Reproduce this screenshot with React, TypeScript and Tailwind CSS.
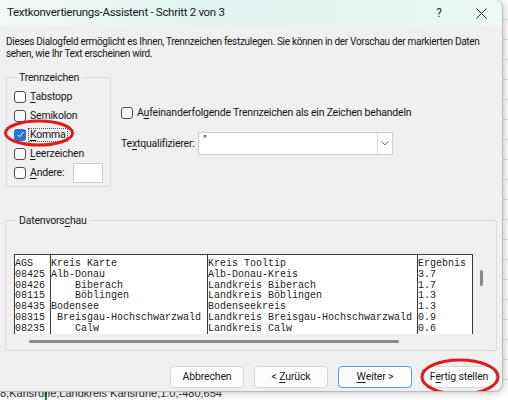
import React from "react";

const U = ({ children }: { children: React.ReactNode }) => (
  <span className="underline underline-offset-[2px] decoration-[1px]">{children}</span>
);

function Check({ checked = false }: { checked?: boolean }) {
  if (checked) {
    return (
      <span className="w-[12px] h-[12px] shrink-0 rounded-[3px] bg-[#2a72cf] flex items-center justify-center">
        <svg width="9" height="9" viewBox="0 0 9 9">
          <path d="M1.6 4.8 L3.6 6.7 L7.4 2.3" fill="none" stroke="#ffffff" strokeWidth="1" />
        </svg>
      </span>
    );
  }
  return <span className="w-[12px] h-[12px] shrink-0 rounded-[3px] border border-[#4d4d4d] bg-[#fbfbfb]" />;
}

const col1 = ["AGS", "08425", "08426", "08115", "08435", "08315", "08235"];
const col2 = [
  "Kreis Karte",
  "Alb-Donau",
  "    Biberach",
  "    Böblingen",
  "Bodensee",
  " Breisgau-Hochschwarzwald",
  "    Calw",
];
const col3 = [
  "Kreis Tooltip",
  "Alb-Donau-Kreis",
  "Landkreis Biberach",
  "Landkreis Böblingen",
  "Bodenseekreis",
  "Landkreis Breisgau-Hochschwarzwald",
  "Landkreis Calw",
];
const col4 = ["Ergebnis", "3.7", "1.7", "1.3", "1.3", "0.9", "0.6"];

function Column({ lines, width, last = false }: { lines: string[]; width: string; last?: boolean }) {
  return (
    <div
      className={`${width} h-full shrink-0 overflow-hidden border-l border-[#3a3a3a] pt-[4px] ${
        last ? "border-r" : ""
      }`}
    >
      {lines.map((l, i) => (
        <div key={i} className="whitespace-pre leading-[10.8px] h-[10.8px]">
          {l}
        </div>
      ))}
    </div>
  );
}

function Button({ children, primary = false }: { children: React.ReactNode; primary?: boolean }) {
  return (
    <div
      className={`w-[74px] h-[22px] rounded-[4px] bg-[#fdfdfd] flex items-center justify-center whitespace-pre text-[10.5px] tracking-[-0.15px] text-[#1b1b1b] border ${
        primary ? "border-[#5b9ad9]" : "border-[#d6d6d6]"
      }`}
    >
      {children}
    </div>
  );
}

export default function App() {
  return (
    <div className="relative w-[508px] h-[400px] overflow-hidden bg-white font-['Roboto',sans-serif]">
      {/* worksheet behind the dialog */}
      <div className="flex flex-col">
        {Array.from({ length: 19 }).map((_, i) => (
          <div key={i} className="h-[20px] border-b border-[#e3e3e3]" />
        ))}
        <div className="h-[20px] relative flex items-end">
          <div className="w-[47px] h-full border-r-2 border-[#1f7a45]" />
        </div>
      </div>
      <div className="absolute left-0 top-[386px] text-[11px] leading-[14px] text-[#333] whitespace-nowrap font-['Liberation_Sans',sans-serif]">
        8,Karlsruhe,Landkreis Karlsruhe,1.0,-480,654
      </div>

      {/* dialog window */}
      <div className="absolute left-0 top-0 w-[503px] h-[392px] bg-[#f0f0f0] rounded-r-[8px] border-r border-b border-[#b9b9b9] shadow-[0_0_10px_rgba(0,0,0,0.28)] overflow-hidden text-[#161616]">
        {/* title bar */}
        <div className="h-[26px] flex items-center pl-[7px] bg-[linear-gradient(90deg,#f1f8f7_0%,#e2f3f1_45%,#e6f5f2_75%,#eef8f6_100%)]">
          <span className="text-[11.5px] tracking-[-0.3px]">Textkonvertierungs-Assistent - Schritt 2 von 3</span>
          <span className="ml-auto text-[12px] text-[#333]">?</span>
          <span className="ml-[34px] mr-[15px] flex items-center">
            <svg width="11" height="11" viewBox="0 0 11 11">
              <path d="M0.5 0.5 L10.5 10.5 M10.5 0.5 L0.5 10.5" stroke="#222" strokeWidth="1" />
            </svg>
          </span>
        </div>

        <div className="px-[6px] pt-[10px]">
          <div className="text-[10px] leading-[12px] tracking-[-0.3px]">
            <div className="whitespace-nowrap">
              Dieses Dialogfeld ermöglicht es Ihnen, Trennzeichen festzulegen. Sie können in der Vorschau der markierten Daten
            </div>
            <div className="whitespace-nowrap">sehen, wie Ihr Text erscheinen wird.</div>
          </div>

          <div className="flex mt-[11px]">
            <fieldset className="w-[105px] border border-[#dcdcdc] rounded-[2px] px-[7px] pb-[4px]">
              <legend className="ml-[3px] px-[2px] text-[10.5px] leading-[13px] tracking-[-0.2px]">Trennzeichen</legend>
              <div className="pt-[3px] text-[10.5px] tracking-[-0.2px]">
                <div className="h-[19px] flex items-center gap-[4px]">
                  <Check />
                  <span><U>T</U>abstopp</span>
                </div>
                <div className="h-[19px] flex items-center gap-[4px]">
                  <Check />
                  <span>Se<U>m</U>ikolon</span>
                </div>
                <div className="h-[19px] flex items-center gap-[2px]">
                  <Check checked />
                  <span className="border border-dotted border-[#555] px-[1px] leading-[12px]"><U>K</U>omma</span>
                </div>
                <div className="h-[19px] flex items-center gap-[4px]">
                  <Check />
                  <span><U>L</U>eerzeichen</span>
                </div>
                <div className="h-[19px] flex items-center gap-[4px]">
                  <Check />
                  <span><U>A</U>ndere:</span>
                  <span className="ml-auto w-[30px] h-[20px] bg-white border border-[#cfcfcf]" />
                </div>
              </div>
            </fieldset>

            <div className="ml-[10px] pt-[32px] text-[10.5px] tracking-[-0.2px]">
              <div className="h-[19px] flex items-center gap-[4px]">
                <Check />
                <span>A<U>u</U>feinanderfolgende Trennzeichen als ein Zeichen behandeln</span>
              </div>
              <div className="mt-[10px] flex items-center">
                <span className="w-[77px] whitespace-nowrap">Te<U>x</U>tqualifizierer:</span>
                <div className="w-[195px] h-[23px] bg-white border border-[#cdcdcd] flex">
                  <span className="flex-1 pl-[4px] leading-[14px] text-[11px]">"</span>
                  <span className="w-[15px] border-l border-[#dadada] flex items-center justify-center">
                    <svg width="8" height="5" viewBox="0 0 8 5">
                      <path d="M0.5 0.5 L4 4 L7.5 0.5" fill="none" stroke="#7a7a7a" strokeWidth="1" />
                    </svg>
                  </span>
                </div>
              </div>
            </div>
          </div>

          <fieldset className="mt-[27px] -ml-[1px] w-[492px] border border-[#dcdcdc] rounded-[2px] pl-[8px] pb-[7px]">
            <legend className="ml-[3px] px-[2px] text-[10.5px] leading-[13px] tracking-[-0.2px]">
              Datenvors<U>c</U>hau
            </legend>
            <div className="mt-[27px] flex">
              <div className="w-[459px] h-[80px] bg-white border-t border-[#3a3a3a] flex overflow-hidden font-['Liberation_Mono',monospace] text-[10px] text-[#1e1e1e]">
                <Column lines={col1} width="w-[36px]" />
                <Column lines={col2} width="w-[157px]" />
                <Column lines={col3} width="w-[210px]" />
                <Column lines={col4} width="w-[56px]" last />
              </div>
              <div className="ml-[7px] pt-[16px]">
                <div className="w-[3px] h-[16px] rounded-full bg-[#8a8a8a]" />
              </div>
            </div>
            <div className="mt-[6px] ml-[15px] w-[370px] h-[3px] rounded-full bg-[#8a8a8a]" />
          </fieldset>

          <div className="mt-[15px] flex justify-end gap-[10px]">
            <Button>Abbrechen</Button>
            <Button>
              {"< "}
              <U>Z</U>urück
            </Button>
            <Button primary>
              <U>W</U>eiter{" >"}
            </Button>
            <Button>
              F<U>e</U>rtig stellen
            </Button>
          </div>
        </div>

        {/* red markings */}
        <svg className="absolute left-[3px] top-[118px]" width="72" height="30" viewBox="0 0 72 30">
          <ellipse cx="36" cy="15" rx="33.5" ry="12" fill="none" stroke="#e01b1b" strokeWidth="3" />
        </svg>
        <svg className="absolute left-[419px] top-[357px]" width="82" height="40" viewBox="0 0 82 40">
          <ellipse cx="41" cy="20" rx="38" ry="17" fill="none" stroke="#e01b1b" strokeWidth="3" />
        </svg>
      </div>
    </div>
  );
}
